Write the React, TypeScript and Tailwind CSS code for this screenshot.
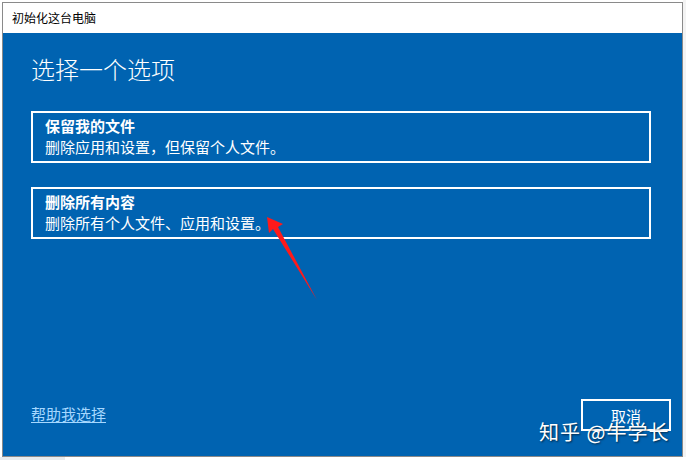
import React from 'react';

const cjk = { fontFamily: '"Noto Sans CJK SC", "Noto Sans", sans-serif' };

function OptionBox({ title, desc }: { title: string; desc: string }) {
  return (
    <div className="w-[620px] h-[52px] border-2 border-white px-[12px] pt-[3px] text-white">
      <div className="text-[15px] font-bold leading-[20px]">{title}</div>
      <div className="text-[15px] leading-[22px]">{desc}</div>
    </div>
  );
}

export default function App() {
  return (
    <div className="relative w-[686px] h-[460px] overflow-hidden bg-white" style={cjk}>
      <div className="flex">
        <div className="ml-[2px] mt-[2px] w-[681px] border border-[#8a8a8a] bg-white">
          <div className="h-[30px] flex items-center pl-[9px] text-[12px] text-black">初始化这台电脑</div>
          <div className="h-[423px] bg-[#0063b1] pl-[28px] pr-[30px] flex flex-col">
            <h1 className="mt-[20px] text-[24px] leading-[32px] text-white font-light">选择一个选项</h1>
            <div className="mt-[26px] flex flex-col gap-[24px]">
              <OptionBox title="保留我的文件" desc="删除应用和设置，但保留个人文件。" />
              <OptionBox title="删除所有内容" desc="删除所有个人文件、应用和设置。" />
            </div>
            <div className="mt-auto mb-[25px] flex items-end justify-between">
              <a href="#" className="mb-[6px] text-[15px] text-[#a6d8ff] underline underline-offset-2">帮助我选择</a>
              <button className="mr-[-19px] w-[90px] h-[32px] border-2 border-white text-white text-[15px] leading-none">取消</button>
            </div>
          </div>
        </div>
        <div className="flex-1 bg-[#f3f3f3]"></div>
      </div>
      <div className="h-[4px] w-[65px] bg-[#e8ecef]"></div>

      <svg className="absolute left-0 top-0 pointer-events-none" width="686" height="460">
        <polygon points="267,217 283,224 278,227 317,300 273,229 269,233" fill="#ff1a1a" />
      </svg>

      <div
        className="absolute left-[539px] top-[418px] text-[20px] leading-[28px] text-white tracking-[1px]"
        style={{ textShadow: '1px 1px 2px rgba(0,0,0,0.6)' }}
      >
        知乎 @牛学长
      </div>
    </div>
  );
}
